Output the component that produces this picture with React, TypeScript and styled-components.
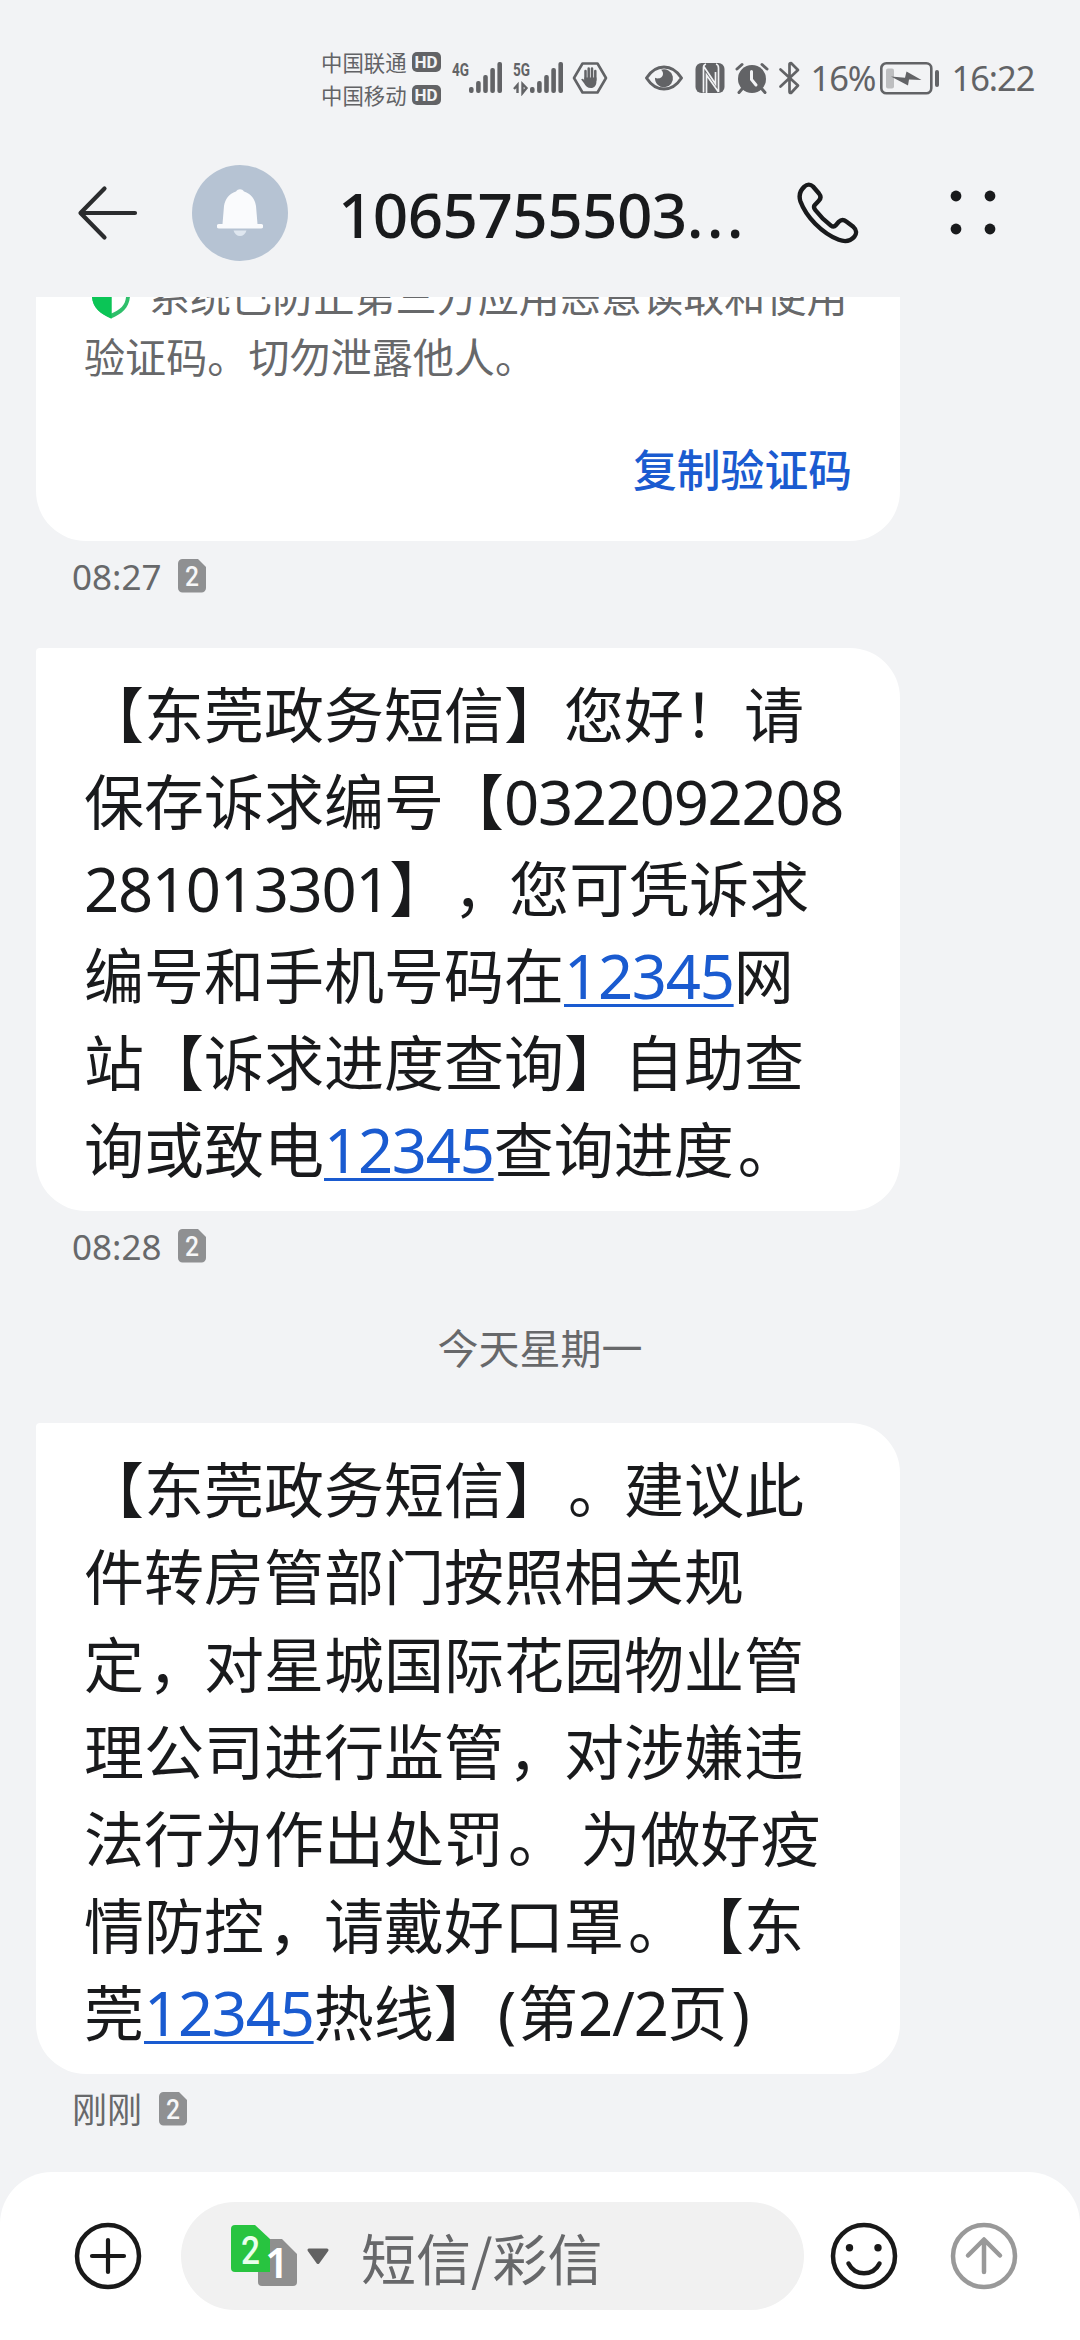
import React from 'react';
import styled, { createGlobalStyle } from 'styled-components';

const latin = '"Noto Sans", "Noto Sans CJK SC", sans-serif';
const cjk = '"Noto Sans CJK SC", "Noto Sans", sans-serif';

const GlobalStyle = createGlobalStyle`
  * { box-sizing: border-box; }
  body { margin: 0; background: #f2f3f5; text-spacing-trim: space-all; }
  svg { display: block; flex: none; }
`;

const Screen = styled.div`
  width: 1080px;
  height: 2340px;
  display: flex;
  flex-direction: column;
  overflow: hidden;
  background: #f2f3f5;
  font-family: ${cjk};
  color: #191a1c;
`;

const StatusBar = styled.div`
  height: 156px;
  flex: none;
  display: flex;
  align-items: center;
  padding: 0 46px 0 321px;
  color: #626366;
`;

const Carriers = styled.div`
  display: flex;
  flex-direction: column;
  gap: 1px;
  width: 120px;
`;

const Carrier = styled.div`
  display: flex;
  align-items: center;
  gap: 5px;
  height: 32px;
  font-size: 21.4px;
  line-height: 32px;
  white-space: nowrap;
`;

const HdBadge = styled.span`
  width: 29px;
  height: 20px;
  border-radius: 5px;
  background: #626366;
  color: #f2f3f5;
  font: 700 17px/20px "Roboto", sans-serif;
  text-align: center;
`;

const StatusIcon = styled.div<{ $gap: number }>`
  margin-left: ${(p) => p.$gap}px;
`;

const StatusText = styled.div<{ $gap: number; $width: number }>`
  margin-left: ${(p) => p.$gap}px;
  width: ${(p) => p.$width}px;
  flex: none;
  font: 400 34.5px/44px ${latin};
  letter-spacing: -1.1px;
  white-space: nowrap;
`;

const Header = styled.header`
  height: 141px;
  flex: none;
  display: flex;
  align-items: flex-start;
  padding: 8px 83px 0 76px;
`;

const HeaderIcon = styled.div<{ $gap: number }>`
  height: 98px;
  display: flex;
  align-items: center;
  margin-left: ${(p) => p.$gap}px;
`;

const Avatar = styled.div`
  width: 96px;
  height: 96px;
  margin: 1px 0 0 52px;
  border-radius: 50%;
  background: #b6c3d3;
  display: flex;
  align-items: center;
  justify-content: center;
`;

const Title = styled.h1`
  width: 410px;
  margin: 2px 0 0 50px;
  font: 500 62px/96px ${latin};
  letter-spacing: -0.6px;
  white-space: nowrap;
`;

const Dots = styled.span`
  letter-spacing: 3.2px;
`;

const Thread = styled.main`
  flex: 1;
  min-height: 0;
  overflow: hidden;
  display: flex;
  flex-direction: column;
  justify-content: flex-end;
  padding: 0 36px 41px;
`;

const Bubble = styled.article`
  width: 864px;
  flex: none;
  padding: 20px 0 21px 48px;
  border-radius: 4px 50px 50px 50px;
  background: #fff;
`;

const Line = styled.p`
  margin: 0;
  height: 87.1px;
  font-size: 60px;
  line-height: 87.1px;
  word-spacing: 3px;
  white-space: pre;
`;

const Stop = styled.span`
  margin: 0 -4px 0 4px;
`;

const Digits = styled.span`
  font-family: ${latin};
  font-size: 61.5px;
  line-height: 1;
  letter-spacing: -1.25px;
`;

const Paren = styled(Digits)`
  padding: 0 2px 0 4px;
  letter-spacing: 0;
`;

const NumberLink = styled(Digits).attrs({ as: 'a' })`
  color: #1a5bd0;
  text-decoration: underline;
  text-decoration-thickness: 3px;
  text-underline-offset: 5px;
`;

const CodeBubble = styled(Bubble)`
  padding: 40px 48px 41px;
`;

const Notice = styled.p`
  margin: 0;
  display: flex;
  align-items: center;
  height: 61.5px;
  font-size: 41.1px;
  line-height: 61.5px;
  color: #67686a;
  white-space: nowrap;
`;

const NoticeIcon = styled.span`
  width: 65px;
  padding-left: 7px;
`;

const CopyAction = styled.button`
  display: block;
  margin: 49px 0 0 auto;
  padding: 0;
  border: 0;
  background: none;
  color: #1a5bd0;
  font: 500 43.8px/64px ${cjk};
`;

const Meta = styled.div<{ $height: number }>`
  height: ${(p) => p.$height}px;
  flex: none;
  display: flex;
  align-items: flex-start;
  gap: 16.5px;
  padding: 14px 0 0 36px;
  font: 400 35px/44px ${latin};
  color: #67686a;
`;

const MetaIcon = styled.span`
  margin-top: 4px;
`;

const DateLabel = styled.div`
  height: 107px;
  flex: none;
  text-align: center;
  font-size: 41px;
  line-height: 61px;
  color: #67686a;
`;

const Composer = styled.footer`
  height: 168px;
  flex: none;
  display: flex;
  align-items: center;
  padding: 0 61px 0 74px;
  border-radius: 52px 52px 0 0;
  background: #fff;
`;

const Field = styled.div`
  width: 623px;
  height: 108px;
  margin: 0 26px 0 39px;
  padding-left: 50px;
  display: flex;
  align-items: center;
  border-radius: 54px;
  background: #f1f1f1;
`;

const Placeholder = styled.span`
  margin-left: 30px;
  font-size: 55px;
  line-height: 80px;
  color: #67686a;
  white-space: nowrap;
`;

const Send = styled.div`
  margin-left: 52px;
`;

const Signal = ({ label, data }: { label: string; data?: boolean }) => (
  <svg width={data ? 51 : 52} height="36" viewBox={data ? '1 0 51 36' : '0 0 52 36'}>
    <text x="1" y="16" fontFamily="Roboto, sans-serif" fontSize="18.500" fontWeight="700" fill="#626366" textLength="17" lengthAdjust="spacingAndGlyphs">{label}</text>
    {[27, 21, 15, 8, 2].map((top, i) => (
      <rect key={top} x={18 + i * 7.1} y={top} width="4.6" height={33 - top} rx="2" fill="#626366" />
    ))}
    {data && <path d="M5.500 33V25L2 29M10.500 24v9l4-5z" fill="none" stroke="#626366" strokeWidth="2.400" />}
  </svg>
);

const HandIcon = () => (
  <svg width="36" height="34" viewBox="0 0 36 34">
    <path d="M10.5 2.5h15L34 17l-8.5 14.500h-15L2 17z" fill="none" stroke="#626366" strokeWidth="2.6" strokeLinejoin="round" />
    <path d="M13.500 19V10M16.700 18V7.500M20 18V7.500M23.300 19V10" stroke="#626366" strokeWidth="2.5" strokeLinecap="round" />
    <path d="M12.400 16.500h12v4c0 4-2 6.500-5.500 6.500-3.500 0-5-1.800-7-5l-2.700-3.500c.8-1.500 2.300-.8 3.200 1z" fill="#626366" />
  </svg>
);

const EyeIcon = () => (
  <svg width="40" height="28" viewBox="0 0 40 28">
    <path d="M2.500 14C7 7 13 3 20 3s13 4 17.500 11C33 21 27 25 20 25S7 21 2.500 14z" fill="none" stroke="#626366" strokeWidth="3" strokeLinejoin="round" />
    <path d="M17 5.800a9 9 0 1 1-6 8c3.500 1.800 8 0 8-4 0-1.700-.8-3-2-4z" fill="#626366" />
  </svg>
);

const NfcIcon = () => (
  <svg width="30" height="32" viewBox="0 0 30 32">
    <rect x=".5" y="1" width="29" height="30" rx="6" fill="#626366" />
    <path d="M8.500 30.500V5.500c0-2 1-3 2.500-3.500M8.500 4l12 18V10M11.500 31V13l12 17M21 2c1.800.5 2.500 2 2.500 4v24" fill="none" stroke="#f2f3f5" strokeWidth="1.700" />
  </svg>
);

const AlarmIcon = () => (
  <svg width="34" height="32" viewBox="0 0 34 32">
    <circle cx="17" cy="17" r="14" fill="#626366" />
    <path d="M2 7l5-4.500M32 7l-5-4.500M7 27l-3 3.500M27 27l3 3.500" stroke="#626366" strokeWidth="3" strokeLinecap="round" />
    <path d="M16.500 9.500v8l4.500 5.500" fill="none" stroke="#f2f3f5" strokeWidth="3" strokeLinecap="round" />
  </svg>
);

const BluetoothIcon = () => (
  <svg width="24" height="36" viewBox="0 0 24 36">
    <path d="M2.500 9.500L20 25.500l-7 7.500c-1 0-1.500-.5-1.500-1.500V4.500c0-1 .5-1.500 1.500-1.500l7 7L2.500 26.500" fill="none" stroke="#626366" strokeWidth="2.700" strokeLinecap="round" strokeLinejoin="round" />
  </svg>
);

const BatteryIcon = () => (
  <svg width="60" height="34" viewBox="0 0 60 34">
    <rect x="1.300" y="2.300" width="50" height="30" rx="5" fill="none" stroke="#626366" strokeWidth="2.600" />
    <rect x="6" y="7.500" width="8" height="20" rx="2" fill="#bdbec0" />
    <path d="M11 15.500l14 1.200L26.500 10.500l15 8.500-12.500-.5L28 24.500z" fill="#626366" />
    <rect x="55" y="9" width="4" height="17" rx="2" fill="#626366" />
  </svg>
);

const BackIcon = () => (
  <svg width="64" height="60" viewBox="0 0 64 60">
    <path d="M59 30H5M28.500 5.500L4.500 30l24 24.500" fill="none" stroke="#2b2c2e" strokeWidth="4.200" strokeLinecap="round" strokeLinejoin="round" />
  </svg>
);

const BellIcon = () => (
  <svg width="46" height="50" viewBox="0 0 46 50">
    <path d="M19 3.500c2-3 6-3 8 0C34 6 38 11 39 18l1.500 18H44a2.200 2.200 0 0 1 0 4.500H2A2.200 2.200 0 0 1 2 36h3.500L7 18C8 11 12 6 19 3.500z" fill="#fafbfd" />
    <path d="M16.500 42.500h13c-1 3.500-3.500 5.500-6.500 5.500s-5.500-2-6.500-5.500z" fill="#dfe7f0" />
  </svg>
);

const PhoneIcon = () => (
  <svg width="62" height="62" viewBox="0 0 62 62">
    <path d="M7.500 4.500C10 2 13.500 2 16 4.500l6 7c2 2.500 2 5-.2 7.300l-4 4.200c-1.500 1.700-1 3 .5 5 5 6.500 9.500 11 15.500 15.500 2 1.500 3.500 1.500 5-.2l3-3.500c2.200-2.300 5-2.300 7.500-.3l7 5.300c3.500 3 3.500 7 1 10-3.500 4-9 5.500-15.500 3C24.500 51 9 34.500 3.500 19.500 1.500 13.500 3 8.500 7.500 4.500z" fill="none" stroke="#191a1c" strokeWidth="4.400" strokeLinejoin="round" />
  </svg>
);

const MoreIcon = () => (
  <svg width="46" height="46" viewBox="0 0 46 46">
    {[6, 40].map((x) => [6, 39].map((y) => <circle key={`${x}-${y}`} cx={x} cy={y} r="5.400" fill="#191a1c" />))}
  </svg>
);

const ShieldIcon = () => (
  <svg width="40" height="48" viewBox="0 0 40 48">
    <path d="M20 2L1 8v16c0 12 8 19 19 23.500C31 43 39 36 39 24V8z" fill="#2fbf6b" />
    <path d="M20.500 26v16.500C29 39 34.500 34 35 26z" fill="#fff" />
    <path d="M20 6L5.500 11v13H20z" fill="#fff" />
    <path d="M1 26h19.500v21.500C9 42.500 1.500 36 1 26z" fill="#0bc556" />
  </svg>
);

const SimIcon = ({ slot }: { slot: string }) => (
  <svg width="28" height="34" viewBox="0 0 28 34">
    <path d="M4.500 0H20l8 8v21a4.500 4.500 0 0 1-4.500 4.500h-19A4.500 4.500 0 0 1 0 29V4.500A4.500 4.500 0 0 1 4.500 0z" fill="#8f9092" />
    <text x="14" y="27" textAnchor="middle" fontFamily="Roboto, sans-serif" fontSize="28" fontWeight="500" fill="#f7f7f8" textLength="14" lengthAdjust="spacingAndGlyphs">{slot}</text>
  </svg>
);

const DualSimIcon = () => (
  <svg width="100" height="62" viewBox="0 0 100 62">
    <path d="M31 14h20l15 15v28a4 4 0 0 1-4 4H31a4 4 0 0 1-4-4V18a4 4 0 0 1 4-4z" fill="#8f8f8f" />
    <path d="M4 0h20l15 14v33H4a4 4 0 0 1-4-4V4a4 4 0 0 1 4-4z" fill="#28c440" />
    <text x="46" y="53" textAnchor="middle" fontFamily="Noto Sans, sans-serif" fontSize="42" fontWeight="600" fill="#fff">1</text>
    <text x="19.500" y="39" textAnchor="middle" fontFamily="Roboto, sans-serif" fontSize="39" fontWeight="500" fill="#e9ffec" textLength="19" lengthAdjust="spacingAndGlyphs">2</text>
    <path d="M78 25h18L87 37.500z" fill="#626262" stroke="#626262" strokeWidth="3" strokeLinejoin="round" />
  </svg>
);

const PlusIcon = () => (
  <svg width="68" height="68" viewBox="0 0 68 68">
    <circle cx="34" cy="34" r="31" fill="none" stroke="#191919" strokeWidth="4.500" />
    <path d="M34 18v32M18 34h32" stroke="#191919" strokeWidth="4.200" strokeLinecap="round" />
  </svg>
);

const SmileIcon = () => (
  <svg width="68" height="68" viewBox="0 0 68 68">
    <circle cx="34" cy="34" r="31" fill="none" stroke="#191919" strokeWidth="4.500" />
    <circle cx="19.500" cy="25.700" r="3.700" fill="#191919" />
    <circle cx="48" cy="25.700" r="3.700" fill="#191919" />
    <path d="M18.500 41.500c6.500 13 24.500 13 31 0" fill="none" stroke="#191919" strokeWidth="4.500" strokeLinecap="round" />
  </svg>
);

const SendIcon = () => (
  <svg width="68" height="68" viewBox="0 0 68 68">
    <circle cx="34" cy="34" r="31" fill="none" stroke="#999" strokeWidth="4.500" />
    <path d="M34 18v32M18 33.500l16-16 16 16" fill="none" stroke="#999" strokeWidth="4.500" strokeLinecap="round" strokeLinejoin="round" />
  </svg>
);

const Stamp = ({ time, height }: { time: string; height: number }) => (
  <Meta $height={height}>
    <span>{time}</span>
    <MetaIcon><SimIcon slot="2" /></MetaIcon>
  </Meta>
);

export default function App() {
  return (
    <Screen>
      <GlobalStyle />
      <StatusBar>
        <Carriers>
          <Carrier>中国联通<HdBadge>HD</HdBadge></Carrier>
          <Carrier>中国移动<HdBadge>HD</HdBadge></Carrier>
        </Carriers>
        <StatusIcon $gap={10}><Signal label="4G" /></StatusIcon>
        <StatusIcon $gap={10}><Signal label="5G" data /></StatusIcon>
        <StatusIcon $gap={8}><HandIcon /></StatusIcon>
        <StatusIcon $gap={36}><EyeIcon /></StatusIcon>
        <StatusIcon $gap={11}><NfcIcon /></StatusIcon>
        <StatusIcon $gap={10}><AlarmIcon /></StatusIcon>
        <StatusIcon $gap={9}><BluetoothIcon /></StatusIcon>
        <StatusText $gap={9} $width={66}>16%</StatusText>
        <StatusIcon $gap={3}><BatteryIcon /></StatusIcon>
        <StatusText $gap={12} $width={84}>16:22</StatusText>
      </StatusBar>
      <Header>
        <HeaderIcon $gap={0}><BackIcon /></HeaderIcon>
        <Avatar><BellIcon /></Avatar>
        <Title>1065755503<Dots>...</Dots></Title>
        <HeaderIcon $gap={49}><PhoneIcon /></HeaderIcon>
        <HeaderIcon $gap={91}><MoreIcon /></HeaderIcon>
      </Header>
      <Thread>
        <CodeBubble>
          <Notice><NoticeIcon><ShieldIcon /></NoticeIcon>系统已防止第三方应用恶意读取和使用</Notice>
          <Notice>验证码。切勿泄露他人。</Notice>
          <CopyAction>复制验证码</CopyAction>
        </CodeBubble>
        <Stamp time="08:27" height={107} />
        <Bubble>
          <Line>【东莞政务短信】您好！请</Line>
          <Line>保存诉求编号【<Digits>0322092208</Digits></Line>
          <Line><Digits>281013301</Digits>】<Stop>，</Stop>您可凭诉求</Line>
          <Line>编号和手机号码在<NumberLink>12345</NumberLink>网</Line>
          <Line>站【诉求进度查询】自助查</Line>
          <Line>询或致电<NumberLink>12345</NumberLink>查询进度<Stop>。</Stop></Line>
        </Bubble>
        <Stamp time="08:28" height={105} />
        <DateLabel>今天星期一</DateLabel>
        <Bubble>
          <Line>【东莞政务短信】<Stop>。</Stop>建议此</Line>
          <Line>件转房管部门按照相关规</Line>
          <Line>定<Stop>，</Stop>对星城国际花园物业管</Line>
          <Line>理公司进行监管<Stop>，</Stop>对涉嫌违</Line>
          <Line>法行为作出处罚<Stop>。</Stop> 为做好疫</Line>
          <Line>情防控<Stop>，</Stop>请戴好口罩<Stop>。</Stop>【东</Line>
          <Line>莞<NumberLink>12345</NumberLink>热线】<Paren>(</Paren>第<Digits>2/2</Digits>页<Paren>)</Paren></Line>
        </Bubble>
        <Stamp time="刚刚" height={57} />
      </Thread>
      <Composer>
        <PlusIcon />
        <Field>
          <DualSimIcon />
          <Placeholder>短信/彩信</Placeholder>
        </Field>
        <SmileIcon />
        <Send><SendIcon /></Send>
      </Composer>
    </Screen>
  );
}
